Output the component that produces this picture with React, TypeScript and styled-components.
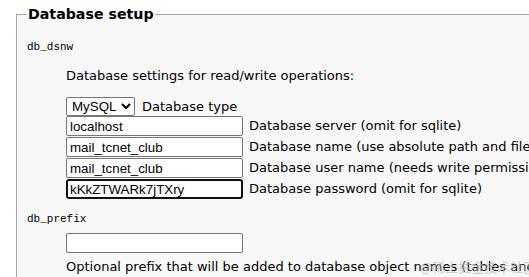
import React from "react";
import styled, { createGlobalStyle } from "styled-components";

const Global = createGlobalStyle`
  html, body { margin: 0; padding: 0; background: #ffffff; overflow: hidden; }
  body { width: 529px; height: 277px; position: relative; }
`;

const Fieldset = styled.fieldset`
  margin: 5px 0 0 16px;
  padding: 0 10px 20px 10px;
  width: 640px;
  border: 1px solid #a8a8a8;
  background: #f8f8f8;
  font-family: "DejaVu Sans", Verdana, sans-serif;
  font-size: 13px;
  color: #000;
`;

const Legend = styled.legend`
  margin-left: 0;
  padding: 0 1px;
  font-family: "DejaVu Sans", Verdana, sans-serif;
  font-weight: bold;
  font-size: 14.2px;
  line-height: 18px;
  color: #000;
`;

const Key = styled.div<{ $top: number }>`
  margin-top: ${(p) => p.$top}px;
  font-family: "Liberation Mono", "Courier New", monospace;
  font-size: 11px;
  line-height: 14px;
  height: 14px;
`;

const Body = styled.div<{ $top: number }>`
  margin: ${(p) => p.$top}px 0 0 39px;
  display: flex;
  flex-direction: column;
`;

const Text = styled.div<{ $top?: number }>`
  margin-top: ${(p) => p.$top ?? 0}px;
  line-height: 16px;
  height: 16px;
  white-space: nowrap;
`;

const Row = styled.div<{ $h: number }>`
  display: flex;
  align-items: flex-start;
  height: ${(p) => p.$h}px;
  white-space: nowrap;
`;

const Select = styled.select`
  box-sizing: border-box;
  height: 19px;
  width: 69px;
  margin: 0;
  padding: 0 0 0 1px;
  font-family: "Liberation Sans", Arial, sans-serif;
  font-size: 13.33px;
  border: 1px solid #767676;
  border-radius: 2px;
  background: #fff;
  color: #000;
`;

const Input = styled.input<{ $focus?: boolean }>`
  box-sizing: border-box;
  width: 177px;
  height: 20px;
  margin: 0;
  padding: 0 ${(p) => (p.$focus ? 2 : 3)}px;
  font-family: "Liberation Sans", Arial, sans-serif;
  font-size: 13.33px;
  color: #000;
  background: #fff;
  border: ${(p) => (p.$focus ? "2px solid #101010" : "1px solid #767676")};
  border-radius: ${(p) => (p.$focus ? 3 : 2)}px;
  outline: none;
`;

const Label = styled.span<{ $left: number }>`
  margin-left: ${(p) => p.$left}px;
  line-height: ${(p) => (p.$left === 7 ? 19 : 20)}px;
`;

const Watermark = styled.div`
  position: absolute;
  left: 420px;
  top: 259px;
  font-family: "Noto Sans CJK SC", sans-serif;
  font-size: 13px;
  line-height: 16px;
  color: rgba(190, 190, 190, 0.75);
  white-space: nowrap;
`;

const fields = [
  { value: "localhost", label: "Database server (omit for sqlite)" },
  { value: "mail_tcnet_club", label: "Database name (use absolute path and filename for sqlite)" },
  { value: "mail_tcnet_club", label: "Database user name (needs write permissions)" },
  { value: "kKkZTWARk7jTXry", label: "Database password (omit for sqlite)", focus: true },
];

export default function App() {
  return (
    <>
      <Global />
      <Fieldset>
        <Legend>Database setup</Legend>
        <Key $top={17}>db_dsnw</Key>
        <Body $top={14}>
          <Text>Database settings for read/write operations:</Text>
          <Row $h={19} style={{ marginTop: 13 }}>
            <Select defaultValue="mysql">
              <option value="mysql">MySQL</option>
            </Select>
            <Label $left={7}>Database type</Label>
          </Row>
          {fields.map((f, i) => (
            <Row $h={21} key={i}>
              <Input readOnly value={f.value} $focus={f.focus} />
              <Label $left={6}>{f.label}</Label>
            </Row>
          ))}
        </Body>
        <Key $top={12}>db_prefix</Key>
        <Body $top={7}>
          <Row $h={20}>
            <Input readOnly value="" />
          </Row>
          <Text $top={6}>Optional prefix that will be added to database object names (tables and sequences).</Text>
        </Body>
      </Fieldset>
      <Watermark>@稀土掘金技术社区</Watermark>
    </>
  );
}
